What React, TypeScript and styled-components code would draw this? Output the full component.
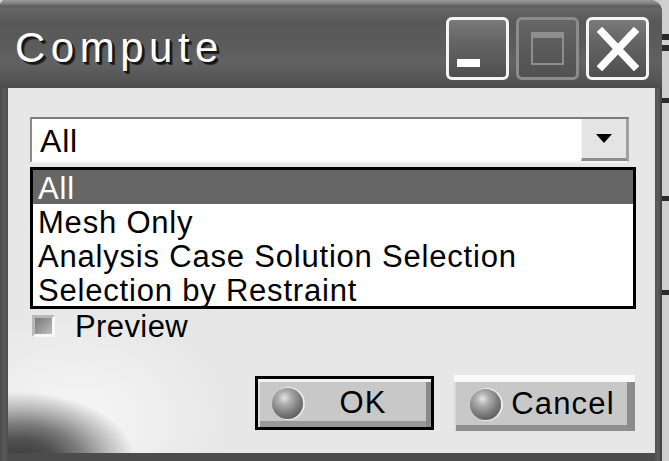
import React from "react";
import styled, { createGlobalStyle } from "styled-components";

const GlobalStyle = createGlobalStyle`
  html, body { margin: 0; padding: 0; background: #cdcdcd; overflow: hidden; }
  #root { width: 669px; height: 461px; }
`;

const Screen = styled.div`
  width: 669px;
  height: 461px;
  display: flex;
  font-family: "Liberation Sans", Arial, sans-serif;
  background: #cdcdcd;
`;

const Window = styled.div`
  width: 662px;
  height: 461px;
  flex: none;
  display: flex;
  flex-direction: column;
  background: linear-gradient(to right, #4a4a4a 0, #5a5a5a 4px, #4c4c4c 8px, #4c4c4c 654px, #5e5e5e 658px, #3e3e3e 662px);
  border-top-left-radius: 6px;
  border-top-right-radius: 12px;
  overflow: hidden;
`;

const TitleBar = styled.div`
  height: 88px;
  flex: none;
  display: flex;
  align-items: flex-start;
  padding: 0 13px 0 15px;
  background: linear-gradient(
    to bottom,
    #9a9a9a 0,
    #858585 3px,
    #5e5e5e 6px,
    #666666 9px,
    #585858 22px,
    #5b5b5b 45px,
    #626262 62px,
    #555555 80px,
    #4a4a4a 88px
  );
`;

const Title = styled.div`
  margin-top: 27px;
  margin-right: auto;
  font-size: 42px;
  line-height: 42px;
  letter-spacing: 5.5px;
  color: #ffffff;
  text-shadow: 1px 1px 0 #151515, 2px 2px 0 #151515, 3px 3px 0 #2a2a2a;
`;

const Controls = styled.div`
  display: flex;
  gap: 7px;
  margin-top: 17px;
`;

type Kind = "min" | "max" | "close";

const WinButton = styled.div<{ $kind: Kind }>`
  width: 63px;
  height: 63px;
  box-sizing: border-box;
  border-radius: 6px;
  border: 3px solid ${(p) => (p.$kind === "max" ? "#8c8c8c" : "#f4f4f4")};
  background: ${(p) =>
    p.$kind === "max"
      ? "linear-gradient(to bottom, #666666, #585858 60%, #525252)"
      : "linear-gradient(to bottom, #7a7a7a 0, #666666 35%, #585858 75%, #4e4e4e 100%)"};
  display: flex;
  align-items: ${(p) => (p.$kind === "min" ? "flex-end" : "center")};
  justify-content: ${(p) => (p.$kind === "min" ? "flex-start" : "center")};
  padding: ${(p) => (p.$kind === "min" ? "0 0 10px 8px" : "0")};
`;

const MinBar = styled.div`
  width: 23px;
  height: 8px;
  background: #ffffff;
`;

const MaxBox = styled.div`
  width: 33px;
  height: 33px;
  box-sizing: border-box;
  border: 2px solid #8e8e8e;
  border-top-width: 6px;
`;

const Body = styled.div`
  flex: 1;
  margin: 0 7px 8px 8px;
  padding: 29px 20px 0 22px;
  display: flex;
  flex-direction: column;
  background:
    radial-gradient(115px 68px at 12px 372px, #3a3a3a 0%, #505050 30%, #7a7a7a 52%, #b4b4b4 74%, rgba(231, 231, 231, 0) 100%),
    radial-gradient(150px 110px at 70px 330px, rgba(248, 248, 248, 0.9) 0%, rgba(231, 231, 231, 0) 100%),
    #e7e7e7;
`;

const ComboWrap = styled.div`
  position: relative;
  width: 599px;
  height: 46px;
  flex: none;
`;

const Combo = styled.div`
  height: 100%;
  box-sizing: border-box;
  display: flex;
  background: #ffffff;
  border-style: solid;
  border-width: 2px 1px 2px 2px;
  border-color: #7c7c7c #a4a4a4 #f4f4f4 #8a8a8a;
`;

const ComboValue = styled.div`
  flex: 1;
  padding: 3px 0 0 8px;
  font-size: 32px;
  line-height: 38px;
  letter-spacing: 0.8px;
  color: #000;
`;

const DropButton = styled.div`
  width: 47px;
  box-sizing: border-box;
  background: #e4e4e4;
  border-left: 1px solid #f6f6f6;
  border-right: 2px solid #a0a0a0;
  border-bottom: 3px solid #8e8e8e;
  display: flex;
  align-items: center;
  justify-content: center;
`;

const List = styled.div`
  position: absolute;
  top: 50px;
  left: 0;
  width: 606px;
  box-sizing: border-box;
  border: 3px solid #000;
  background: #ffffff;
  z-index: 2;
`;

const ListItem = styled.div<{ $selected?: boolean }>`
  height: 34px;
  box-sizing: border-box;
  padding: 4px 0 0 5px;
  font-size: 31px;
  line-height: 30px;
  white-space: nowrap;
  letter-spacing: 0.8px;
  background: ${(p) => (p.$selected ? "#666666" : "transparent")};
  color: ${(p) => (p.$selected ? "#ffffff" : "#000000")};
`;

const PreviewRow = styled.div`
  margin-top: 150px;
  height: 25px;
  display: flex;
  align-items: center;
`;

const CheckBox = styled.div`
  width: 23px;
  height: 22px;
  margin-left: 2px;
  box-sizing: border-box;
  border-style: solid;
  border-width: 3px;
  border-color: #b8b8b8 #f8f8f8 #f8f8f8 #b8b8b8;
  background: linear-gradient(135deg, #7a7a7a 0%, #969696 45%, #c0c0c0 100%);
`;

const CheckLabel = styled.div`
  margin-left: 20px;
  padding-top: 2px;
  font-size: 31px;
  line-height: 34px;
  color: #000;
  letter-spacing: 0.4px;
`;

const ButtonRow = styled.div`
  margin-top: 37px;
  display: flex;
  justify-content: flex-end;
  align-items: center;
  gap: 20px;
`;

const DialogButton = styled.div<{ $focused?: boolean }>`
  box-sizing: border-box;
  width: ${(p) => (p.$focused ? "179px" : "181px")};
  height: ${(p) => (p.$focused ? "54px" : "56px")};
  border: ${(p) => (p.$focused ? "3px solid #000" : "none")};
  background: #c8c8c8;
  box-shadow: ${(p) =>
    p.$focused
      ? "inset 0 3px 0 #f2f2f2, inset 2px 0 0 #dedede, inset -5px 0 0 #8a8a8a, inset 0 -6px 0 #999999"
      : "inset 0 7px 0 #fafafa, inset 2px 0 0 #dadada, inset -8px 0 0 #8c8c8c, inset 0 -6px 0 #8e8e8e"};
  display: flex;
  align-items: center;
  padding: ${(p) => (p.$focused ? "0 8px 0 14px" : "2px 10px 0 16px")};
  font-size: 31px;
  color: #000;
`;

const Sphere = styled.div`
  width: 31px;
  height: 31px;
  flex: none;
  border-radius: 50%;
  background: radial-gradient(circle at 40% 32%, #e6e6e6 0%, #b0b0b0 22%, #7c7c7c 55%, #555555 85%, #4a4a4a 100%);
  box-shadow: 1px 0 0 1px rgba(245, 245, 245, 0.8);
`;

const ButtonLabel = styled.div`
  flex: 1;
  text-align: center;
  letter-spacing: 1.2px;
  line-height: 34px;
`;

const RightStrip = styled.div`
  width: 7px;
  height: 461px;
  flex: none;
  background: linear-gradient(
    to bottom,
    #cfcfcf 0,
    #cfcfcf 34px,
    #2a2a2a 34px,
    #2a2a2a 40px,
    #cfcfcf 40px,
    #cfcfcf 45px,
    #2a2a2a 45px,
    #2a2a2a 51px,
    #cfcfcf 51px,
    #cfcfcf 98px,
    #2a2a2a 98px,
    #2a2a2a 103px,
    #cfcfcf 103px,
    #cfcfcf 196px,
    #2a2a2a 196px,
    #2a2a2a 201px,
    #cfcfcf 201px,
    #cfcfcf 290px,
    #2a2a2a 290px,
    #2a2a2a 295px,
    #cfcfcf 295px
  );
`;

export default function App() {
  return (
    <>
      <GlobalStyle />
      <Screen>
        <Window>
          <TitleBar>
            <Title>Compute</Title>
            <Controls>
              <WinButton $kind="min">
                <MinBar />
              </WinButton>
              <WinButton $kind="max">
                <MaxBox />
              </WinButton>
              <WinButton $kind="close">
                <svg width="42" height="44" viewBox="0 0 42 44">
                  <path d="M5 5 L37 39 M37 5 L5 39" stroke="#ffffff" strokeWidth="7.5" strokeLinecap="square" fill="none" />
                </svg>
              </WinButton>
            </Controls>
          </TitleBar>
          <Body>
            <ComboWrap>
              <Combo>
                <ComboValue>All</ComboValue>
                <DropButton>
                  <svg width="16" height="10" viewBox="0 0 16 10">
                    <path d="M0 0 H16 L8 9 Z" fill="#000" />
                  </svg>
                </DropButton>
              </Combo>
              <List>
                <ListItem $selected>All</ListItem>
                <ListItem>Mesh Only</ListItem>
                <ListItem>Analysis Case Solution Selection</ListItem>
                <ListItem>Selection by Restraint</ListItem>
              </List>
            </ComboWrap>
            <PreviewRow>
              <CheckBox />
              <CheckLabel>Preview</CheckLabel>
            </PreviewRow>
            <ButtonRow>
              <DialogButton $focused>
                <Sphere />
                <ButtonLabel>OK</ButtonLabel>
              </DialogButton>
              <DialogButton>
                <Sphere />
                <ButtonLabel>Cancel</ButtonLabel>
              </DialogButton>
            </ButtonRow>
          </Body>
        </Window>
        <RightStrip />
      </Screen>
    </>
  );
}
